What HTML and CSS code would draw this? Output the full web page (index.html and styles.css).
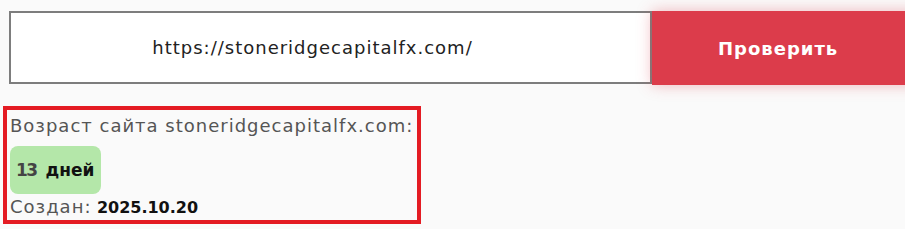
FILE: index.html
```html
<!DOCTYPE html>
<html lang="ru">
<head>
    <meta charset="UTF-8">
    <meta name="viewport" content="width=device-width, initial-scale=1.0">
    <title>Проверка возраста сайта</title>
    <link rel="stylesheet" href="styles.css">
</head>
<body>

<form class="check-form" onsubmit="return false;">
    <input class="url-input" type="text" value="https://stoneridgecapitalfx.com/">
    <button class="check-btn" type="submit">Проверить</button>
</form>

<div class="result">
    <div class="result-title">Возраст сайта stoneridgecapitalfx.com:</div>
    <div class="age-badge"><b>13</b> дней</div>
    <div class="created"><span class="created-label">Создан:</span> <strong>2025.10.20</strong></div>
</div>

</body>
</html>
```

FILE: styles.css
```css
body {
    font-family: "DejaVu Sans", "Open Sans", Arial, sans-serif;
    margin: 0;
    padding: 0;
    background-color: #fafafa;
    color: #222;
    overflow: hidden;
}
.check-form {
    display: flex;
    margin: 11px 0 0 9px;
    width: 1000px;
}
.url-input {
    width: 643px;
    height: 73px;
    box-sizing: border-box;
    border: 2px solid #7d7d7d;
    background: #fff;
    font-family: inherit;
    font-size: 18px;
    letter-spacing: 1px;
    color: #222;
    text-align: center;
    padding: 0 36px 0 0;
    outline: none;
}
.check-btn {
    width: 270px;
    height: 74px;
    border: none;
    background: #dc3c4b;
    color: #fff;
    font-family: inherit;
    font-size: 18px;
    letter-spacing: 1px;
    font-weight: 700;
    text-align: left;
    padding: 0 0 0 66px;
    box-shadow: 0 0 14px rgba(220, 60, 75, 0.35);
    cursor: pointer;
}
.result {
    margin: 21px 0 0 3px;
    width: 418px;
    height: 118px;
    box-sizing: border-box;
    border: 4px solid #e41b23;
    padding: 4px 3px;
    color: #555;
    font-size: 17px;
}
.result-title {
    font-size: 18px;
    letter-spacing: 1px;
    line-height: 24px;
    white-space: nowrap;
}
.age-badge {
    display: inline-block;
    margin-top: 8px;
    width: 91px;
    height: 48px;
    box-sizing: border-box;
    line-height: 48px;
    padding-left: 6px;
    background: #b4e7a9;
    border-radius: 8px;
    color: #111;
    font-weight: 600;
}
.age-badge b {
    color: #444;
    font-weight: 700;
    letter-spacing: -1.5px;
    margin-right: 3px;
}
.created {
    line-height: 26px;
}
.created-label {
    font-size: 18px;
    letter-spacing: 1px;
}
.created strong {
    color: #111;
    font-size: 16px;
    font-weight: 700;
}
```
